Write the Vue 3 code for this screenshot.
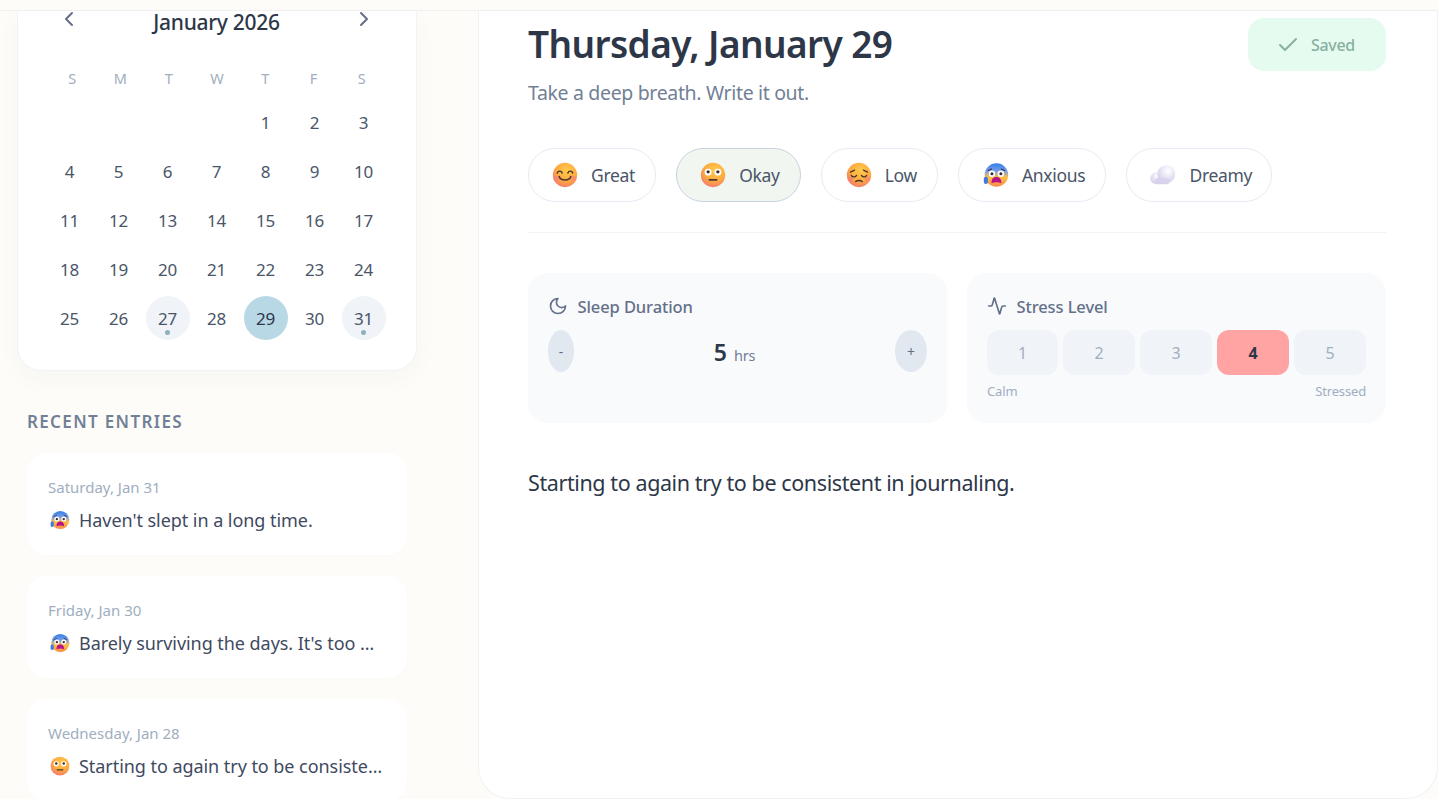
<script setup>
const weekdays = ['S', 'M', 'T', 'W', 'T', 'F', 'S']
const blanks = [1, 2, 3, 4]
const days = Array.from({ length: 31 }, (_, i) => i + 1)
const marked = [27, 31]
const selected = 29
const dayClass = (d) => ({ marked: marked.includes(d), selected: d === selected })

const entries = [
  { date: 'Saturday, Jan 31', emoji: 'anxious', text: "Haven't slept in a long time." },
  { date: 'Friday, Jan 30', emoji: 'anxious', text: "Barely surviving the days. It's too hard to keep going on." },
  { date: 'Wednesday, Jan 28', emoji: 'okay', text: 'Starting to again try to be consistent in journaling.' },
]
const moods = [
  { id: 'great', label: 'Great' },
  { id: 'okay', label: 'Okay', active: true },
  { id: 'low', label: 'Low' },
  { id: 'anxious', label: 'Anxious' },
  { id: 'dreamy', label: 'Dreamy' },
]
const levels = [1, 2, 3, 4, 5]
</script>

<template>
  <div class="app">
    <svg class="defs" width="0" height="0" aria-hidden="true">
      <defs>
        <radialGradient id="face" cx="0.58" cy="0.32" r="0.78">
          <stop offset="0" stop-color="#ffcb4d" />
          <stop offset="0.55" stop-color="#fdaa3f" />
          <stop offset="1" stop-color="#f26d78" />
        </radialGradient>
        <linearGradient id="fear" x1="0" y1="0" x2="0" y2="1">
          <stop offset="0" stop-color="#2f80ec" />
          <stop offset="0.34" stop-color="#7a9de6" />
          <stop offset="0.6" stop-color="#ffc044" />
          <stop offset="1" stop-color="#f98a4a" />
        </linearGradient>
        <radialGradient id="puff" cx="0.6" cy="0.3" r="0.8">
          <stop offset="0" stop-color="#ffffff" />
          <stop offset="1" stop-color="#cfc8e8" />
        </radialGradient>
      </defs>
      <symbol id="great" viewBox="0 0 32 32">
        <circle cx="16" cy="16" r="15" fill="url(#face)" />
        <ellipse cx="6" cy="20" rx="4" ry="3" fill="#f47a7e" opacity="0.55" />
        <ellipse cx="26" cy="20" rx="4" ry="3" fill="#f47a7e" opacity="0.55" />
        <path d="M6.500 13.500c1-3 5-3 6 0M19.500 13.500c1-3 5-3 6 0" fill="none" stroke="#4a3330" stroke-width="1.800" stroke-linecap="round" />
        <path d="M9 18c1.500 5.500 12.500 5.500 14 0" fill="none" stroke="#4a3330" stroke-width="2" stroke-linecap="round" />
      </symbol>
      <symbol id="okay" viewBox="0 0 32 32">
        <circle cx="16" cy="16" r="15" fill="url(#face)" />
        <circle cx="10" cy="12.500" r="4.200" fill="#fff" />
        <circle cx="22" cy="12.500" r="4.200" fill="#fff" />
        <circle cx="10" cy="12" r="2" fill="#402a32" />
        <circle cx="22" cy="12" r="2" fill="#402a32" />
        <path d="M11.500 22h9" stroke="#4a3330" stroke-width="2" stroke-linecap="round" />
      </symbol>
      <symbol id="low" viewBox="0 0 32 32">
        <circle cx="16" cy="16" r="15" fill="url(#face)" />
        <ellipse cx="5.500" cy="21" rx="3.500" ry="2.800" fill="#f47a7e" opacity="0.5" />
        <ellipse cx="26.500" cy="21" rx="3.500" ry="2.800" fill="#f47a7e" opacity="0.5" />
        <path d="M5.500 12.500l5-2.500M26.500 12.500l-5-2.500" stroke="#4a3330" stroke-width="1.500" stroke-linecap="round" />
        <path d="M6.500 16.500c1.500 2.500 5 2.500 6.500 0M19 16.500c1.500 2.500 5 2.500 6.500 0" fill="none" stroke="#4a3330" stroke-width="1.700" stroke-linecap="round" />
        <path d="M12 24c2-1.600 6-1.600 8 0" fill="none" stroke="#4a3330" stroke-width="1.800" stroke-linecap="round" />
      </symbol>
      <symbol id="anxious" viewBox="0 0 32 32">
        <circle cx="16.500" cy="16" r="14.500" fill="url(#fear)" />
        <rect x="1" y="18" width="5" height="9" rx="2.500" fill="#3f78e0" />
        <path d="M6.500 10.500l4-2M26.500 10.500l-4-2" stroke="#3a2d4a" stroke-width="1.300" stroke-linecap="round" />
        <circle cx="11" cy="14.500" r="4" fill="#fff" />
        <circle cx="22" cy="14.500" r="4" fill="#fff" />
        <circle cx="11" cy="14.500" r="1.900" fill="#402a32" />
        <circle cx="22" cy="14.500" r="1.900" fill="#402a32" />
        <path d="M10.500 26c0-6 2.500-7.500 6-7.500s6 1.500 6 7.500c-3.500-1.500-8.500-1.500-12 0Z" fill="#b8128a" />
      </symbol>
      <symbol id="dreamy" viewBox="0 0 32 32">
        <circle cx="8" cy="20" r="7.500" fill="url(#puff)" />
        <circle cx="20" cy="15" r="11" fill="url(#puff)" />
        <rect x="6" y="20" width="18" height="7.500" rx="3.700" fill="#d8d2ec" />
      </symbol>
    </svg>

    <header class="topbar"></header>

    <div class="layout">
      <aside class="sidebar">
        <section class="calendar">
          <div class="cal-head">
            <button class="nav-btn" aria-label="Previous month">
              <svg viewBox="0 0 24 24" class="nav-icon"><path d="m15 18-6-6 6-6" /></svg>
            </button>
            <h2 class="cal-title">January 2026</h2>
            <button class="nav-btn" aria-label="Next month">
              <svg viewBox="0 0 24 24" class="nav-icon"><path d="m9 18 6-6-6-6" /></svg>
            </button>
          </div>
          <div class="weekdays">
            <span v-for="(w, i) in weekdays" :key="i">{{ w }}</span>
          </div>
          <div class="days">
            <span v-for="b in blanks" :key="'b' + b" class="day-blank"></span>
            <button v-for="d in days" :key="d" class="day" :class="dayClass(d)">{{ d }}</button>
          </div>
        </section>

        <section class="recent">
          <h3 class="recent-title">RECENT ENTRIES</h3>
          <div class="entry-list">
            <article v-for="e in entries" :key="e.date" class="entry">
              <div class="entry-date">{{ e.date }}</div>
              <div class="entry-row">
                <svg class="entry-emoji"><use :href="'#' + e.emoji" /></svg>
                <span class="entry-text">{{ e.text }}</span>
              </div>
            </article>
          </div>
        </section>
      </aside>

      <main class="main">
        <div class="title-row">
          <div>
            <h1 class="title">Thursday, January 29</h1>
            <p class="subtitle">Take a deep breath. Write it out.</p>
          </div>
          <button class="saved">
            <svg viewBox="0 0 24 24" class="saved-icon"><path d="M20 6 9 17l-5-5" /></svg>
            <span>Saved</span>
          </button>
        </div>

        <div class="moods">
          <button v-for="m in moods" :key="m.id" class="mood" :class="[m.id, { active: m.active }]">
            <svg class="mood-emoji"><use :href="'#' + m.id" /></svg>
            <span>{{ m.label }}</span>
          </button>
        </div>

        <div class="metrics">
          <section class="metric">
            <div class="metric-label">
              <svg viewBox="0 0 24 24" class="metric-icon"><path d="M12 3a6 6 0 0 0 9 9 9 9 0 1 1-9-9Z" /></svg>
              <span>Sleep Duration</span>
            </div>
            <div class="stepper">
              <button class="step step-minus">-</button>
              <div class="sleep-value"><strong>5</strong><span>hrs</span></div>
              <button class="step step-plus">+</button>
            </div>
          </section>

          <section class="metric">
            <div class="metric-label">
              <svg viewBox="0 0 24 24" class="metric-icon"><path d="M22 12h-2.500a2 2 0 0 0-1.900 1.500l-2.200 7.800a.25.25 0 0 1-.5 0L9.100 2.700a.25.25 0 0 0-.5 0L6.400 10.500A2 2 0 0 1 4.500 12H2" /></svg>
              <span>Stress Level</span>
            </div>
            <div class="levels">
              <button v-for="l in levels" :key="l" class="level" :class="{ on: l === 4 }">{{ l }}</button>
            </div>
            <div class="level-labels"><span>Calm</span><span>Stressed</span></div>
          </section>
        </div>

        <p class="journal">Starting to again try to be consistent in journaling.</p>
      </main>
    </div>
  </div>
</template>

<style>
html, body { margin: 0; overflow: hidden; background: #fdfcf8; }
</style>

<style scoped>
.app {
  width: 1438px;
  height: 799px;
  overflow: hidden;
  display: flex;
  flex-direction: column;
  background: #fdfcf8;
  color: #2d3748;
  font-family: "Noto Sans", "Open Sans", sans-serif;
}
.defs { position: absolute; }
button { font-family: inherit; border: 0; background: none; padding: 0; color: inherit; }
h1, h2, h3, p { margin: 0; }
.topbar { height: 10px; flex: none; border-bottom: 1px solid #f0f0f0; box-sizing: content-box; }
.layout { flex: 1; min-height: 0; display: flex; }

.sidebar { width: 478px; flex: none; padding-left: 17px; box-sizing: border-box; overflow: hidden; }
.calendar {
  width: 400px;
  box-sizing: border-box;
  background: #fff;
  border: 1px solid #f1f3f6;
  border-top: 0;
  border-radius: 0 0 24px 24px;
  box-shadow: 0 8px 24px rgba(45, 55, 72, 0.03);
  padding: 0 29px 30px 30px;
}
.cal-head { height: 22px; display: flex; align-items: center; justify-content: space-between; margin: 0 1px 35px -1px; }
.nav-btn { width: 44px; height: 24px; display: flex; align-items: center; justify-content: center; margin-top: -6px; }
.nav-icon { width: 24px; height: 24px; flex: none; fill: none; stroke: #64708a; stroke-width: 2; stroke-linecap: round; stroke-linejoin: round; }
.cal-title { font-size: 21px; line-height: 22px; font-weight: 500; letter-spacing: -0.3px; color: #2d3748; }
.weekdays { display: grid; grid-template-columns: repeat(7, 1fr); width: 338px; height: 20px; margin-bottom: 12px; }
.weekdays span { text-align: center; font-size: 14.500px; line-height: 20px; color: #a0aec0; }
.days { display: grid; grid-template-columns: repeat(7, 44px); gap: 5px; }
.day-blank { height: 44px; }
.day {
  position: relative;
  width: 44px;
  height: 44px;
  box-sizing: border-box;
  padding-right: 1px;
  border-radius: 50%;
  font-size: 17px;
  letter-spacing: -0.3px;
  color: #4a5568;
}
.day.marked { background: #f0f4f9; }
.day.marked::after {
  content: "";
  position: absolute;
  left: 19px;
  bottom: 5px;
  width: 5px;
  height: 5px;
  border-radius: 50%;
  background: #8fb0bd;
}
.day.selected { background: #b8d8e6; color: #2d3748; }

.recent { margin: 40px 0 0 10px; width: 380px; }
.recent-title { font-size: 17px; line-height: 22px; font-weight: 600; letter-spacing: 1.350px; color: #718096; margin-bottom: 20px; }
.entry-list { display: flex; flex-direction: column; gap: 21px; }
.entry {
  height: 102px;
  box-sizing: border-box;
  background: #fff;
  border-radius: 20px;
  padding: 24px 21px 0;
  box-shadow: 0 1px 4px rgba(45, 55, 72, 0.01);
}
.entry-date { font-size: 15px; line-height: 21px; color: #a0aec0; margin-bottom: 9px; }
.entry-row { display: flex; align-items: center; gap: 9px; }
.entry-emoji { width: 20px; height: 20px; flex: none; margin-left: 2px; }
.entry-text {
  font-size: 18px;
  line-height: 26px;
  letter-spacing: -0.05px;
  color: #3f4a5f;
  white-space: nowrap;
  overflow: hidden;
  text-overflow: ellipsis;
  min-width: 0;
  flex: 1;
  margin-right: 2px;
}

.main {
  width: 960px;
  height: 788px;
  flex: none;
  box-sizing: border-box;
  background: #fff;
  border-left: 1px solid #f1f2f4;
  border-right: 1px solid #f1f2f4;
  border-bottom: 1px solid #f1f2f4;
  border-radius: 0 0 32px 32px;
  padding: 0 51px 0 49px;
}
.title-row { display: flex; justify-content: space-between; align-items: flex-start; padding-top: 7px; height: 130px; box-sizing: border-box; }
.title { font-size: 37px; line-height: 52px; font-weight: 600; letter-spacing: -0.6px; color: #2d3748; }
.subtitle { margin-top: 9px; font-size: 19.500px; line-height: 28px; letter-spacing: -0.34px; color: #718096; }
.saved {
  width: 138px;
  height: 53px;
  padding-right: 3px;
  box-sizing: border-box;
  border-radius: 16px;
  background: #e6fbef;
  color: #86b09f;
  font-size: 16px;
  letter-spacing: -0.3px;
  font-weight: 500;
  display: flex;
  align-items: center;
  justify-content: center;
  gap: 11px;
}
.saved-icon { width: 24px; height: 24px; fill: none; stroke: #86b09f; stroke-width: 2; stroke-linecap: round; stroke-linejoin: round; }

.moods { display: flex; gap: 20px; margin-top: 7px; padding-bottom: 30px; border-bottom: 1px solid #f1f3f6; }
.mood {
  height: 54px;
  box-sizing: border-box;
  display: flex;
  align-items: center;
  gap: 13px;
  padding: 0 20px 0 23px;
  border: 1px solid #e6ebf3;
  border-radius: 27px;
  background: #fff;
  font-size: 17.500px;
  letter-spacing: -0.3px;
  color: #4a5568;
}
.mood.low, .mood.anxious { padding-left: 24px; }
.mood.dreamy { padding-right: 19px; }
.mood.active { background: #f1f6f1; border-color: #c8d3e0; }
.mood-emoji { width: 26px; height: 26px; flex: none; }

.metrics { display: grid; grid-template-columns: 419px 419px; gap: 20px; margin-top: 40px; }
.metric { height: 150px; box-sizing: border-box; background: #f8fafc; border-radius: 20px; padding: 22px 20px 0; }
.metric-label { display: flex; align-items: center; gap: 9.500px; height: 22px; font-size: 16.500px; font-weight: 500; letter-spacing: -0.1px; color: #64708a; margin-bottom: 13px; }
.metric-icon { width: 20px; height: 20px; flex: none; fill: none; stroke: #64708a; stroke-width: 2; stroke-linecap: round; stroke-linejoin: round; }
.stepper { display: flex; align-items: center; justify-content: space-between; }
.step { height: 42px; border-radius: 50%; background: #e2e8f0; color: #64708a; font-size: 14px; }
.step-minus { width: 26px; }
.step-plus { width: 32px; }
.sleep-value { display: flex; align-items: baseline; gap: 7px; padding-top: 2px; }
.sleep-value strong { font-size: 23px; font-weight: 600; color: #2d3748; }
.sleep-value span { font-size: 14.500px; color: #718096; letter-spacing: -0.2px; }
.levels { display: grid; grid-template-columns: 71px 72px 72px 72px 72px; gap: 5px; }
.level { height: 45px; border-radius: 12px; background: #f0f4f9; color: #a0aec0; font-size: 16px; }
.level.on { background: #ffa3a3; color: #2d3748; font-weight: 700; }
.level-labels { display: flex; justify-content: space-between; margin-top: 7px; font-size: 13px; line-height: 18px; letter-spacing: -0.15px; color: #a0aec0; }

.journal { margin-top: 44px; font-size: 21.500px; line-height: 32px; letter-spacing: -0.4px; color: #2d3748; }
</style>
